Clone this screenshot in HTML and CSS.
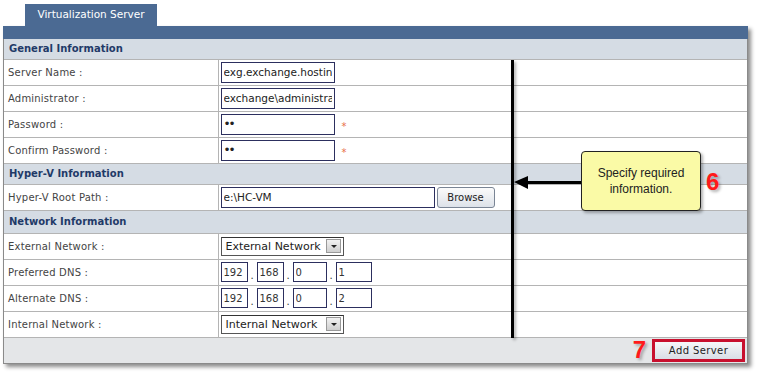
FILE: index.html
```html
<!DOCTYPE html>
<html lang="en">
<head>
    <meta charset="UTF-8">
    <title>Virtualization Server</title>
    <link rel="stylesheet" href="styles.css">
</head>
<body>
    <div class="page">
        <div class="tabs">
            <div class="tab">Virtualization Server</div>
        </div>
        <div class="panel">
            <div class="bar"></div>
            <table class="form">
                <tr class="head"><td colspan="2">General Information</td></tr>
                <tr>
                    <td class="label">Server Name :</td>
                    <td><input class="txt short" type="text" value="exg.exchange.hosting.com"></td>
                </tr>
                <tr>
                    <td class="label">Administrator :</td>
                    <td><input class="txt short" type="text" value="exchange\administrator"></td>
                </tr>
                <tr>
                    <td class="label">Password :</td>
                    <td><input class="txt short pwd" type="text" value="&#8226;&#8226;"><span class="req">*</span></td>
                </tr>
                <tr>
                    <td class="label">Confirm Password :</td>
                    <td><input class="txt short pwd" type="text" value="&#8226;&#8226;"><span class="req">*</span></td>
                </tr>
                <tr class="head"><td colspan="2">Hyper-V Information</td></tr>
                <tr>
                    <td class="label">Hyper-V Root Path :</td>
                    <td><input class="txt long" type="text" value="e:\HC-VM"><button class="btn browse">Browse</button></td>
                </tr>
                <tr class="head net"><td colspan="2">Network Information</td></tr>
                <tr>
                    <td class="label">External Network :</td>
                    <td><div class="select"><span>External Network</span><i class="drop"></i></div></td>
                </tr>
                <tr>
                    <td class="label">Preferred DNS :</td>
                    <td>
                        <div class="ip">
                            <input class="oct" type="text" value="192"><span class="dot">.</span>
                            <input class="oct" type="text" value="168"><span class="dot">.</span>
                            <input class="oct w3" type="text" value="0"><span class="dot">.</span>
                            <input class="oct w4" type="text" value="1">
                        </div>
                    </td>
                </tr>
                <tr>
                    <td class="label">Alternate DNS :</td>
                    <td>
                        <div class="ip">
                            <input class="oct" type="text" value="192"><span class="dot">.</span>
                            <input class="oct" type="text" value="168"><span class="dot">.</span>
                            <input class="oct w3" type="text" value="0"><span class="dot">.</span>
                            <input class="oct w4" type="text" value="2">
                        </div>
                    </td>
                </tr>
                <tr>
                    <td class="label">Internal Network :</td>
                    <td><div class="select"><span>Internal Network</span><i class="drop"></i></div></td>
                </tr>
            </table>
            <div class="footer">
                <span class="step step7">7</span>
                <button class="btn add">Add Server</button>
            </div>
        </div>

        <!-- callout annotation -->
        <div class="vline"></div>
        <div class="arrow"></div>
        <div class="callout">Specify required information.</div>
        <span class="step step6">6</span>
    </div>
</body>
</html>
```

FILE: styles.css
```css
* {
    margin: 0;
    padding: 0;
    box-sizing: border-box;
}

body {
    background: #ffffff;
    font-family: 'DejaVu Sans', Verdana, sans-serif;
    font-size: 10px;
    color: #333;
}

.page {
    position: relative;
    width: 762px;
    height: 374px;
    padding: 4px 0 0 3px;
}

/* Tab strip */
.tabs {
    display: flex;
    padding-left: 22px;
}

.tab {
    width: 132px;
    height: 22px;
    background: #4b6a93;
    color: #fff;
    font-size: 10.5px;
    line-height: 21px;
    text-align: center;
}

/* Main panel */
.panel {
    width: 745px;
    border: 1px solid #8a8a8a;
    border-top: none;
    box-shadow: 3px 3px 4px rgba(0, 0, 0, 0.45);
    background: #fff;
}

.bar {
    height: 13px;
    background: #4b6a93;
    margin: 0 -1px;
}

table.form {
    width: 100%;
    border-collapse: collapse;
}

table.form td {
    height: 26px;
    border-bottom: 1px solid #b4b4b4;
    padding: 0;
    vertical-align: middle;
}

table.form td.label {
    width: 214px;
    border-right: 1px solid #b4b4b4;
    padding-left: 4px;
    color: #444;
    letter-spacing: 0.2px;
}

table.form td + td {
    padding-left: 2px;
}

tr.head td {
    height: 21px;
    background: #d5dce4;
    color: #1f3a68;
    font-weight: bold;
    padding-left: 5px;
    font-size: 10px;
}

tr.head:first-child td {
    height: 20px;
}

tr.net td {
    height: 23px;
}

.txt {
    height: 21px;
    border: 1px solid #2c2f5e;
    font-family: 'DejaVu Sans', Verdana, sans-serif;
    font-size: 10.5px;
    color: #222;
    padding: 0 2px;
    vertical-align: middle;
    outline: none;
}

.pwd {
    font-size: 12px;
    letter-spacing: -2px;
}

.short {
    width: 114px;
}

.long {
    width: 214px;
}

.req {
    color: #e8704a;
    margin-left: 7px;
    font-size: 10px;
    vertical-align: middle;
    position: relative;
    top: 2px;
}

.btn {
    font-family: 'DejaVu Sans', Verdana, sans-serif;
    font-size: 10px;
    color: #222;
    background: linear-gradient(#fbfbfb, #dde2e9);
    border: 1px solid #7a8595;
    border-radius: 3px;
    vertical-align: middle;
}

.browse {
    width: 58px;
    height: 21px;
    margin-left: 2px;
}

.select {
    display: inline-flex;
    align-items: center;
    justify-content: space-between;
    width: 123px;
    height: 19px;
    border: 1px solid #555;
    border-top-color: #333;
    padding: 0 2px 0 4px;
    font-size: 11px;
    color: #222;
    vertical-align: middle;
}

.drop {
    width: 15px;
    height: 14px;
    background: linear-gradient(#f2f2f2, #cfcfcf);
    border: 1px solid #999;
    position: relative;
}

.drop::after {
    content: "";
    position: absolute;
    left: 4px;
    top: 5px;
    border-left: 3px solid transparent;
    border-right: 3px solid transparent;
    border-top: 3px solid #222;
}

.ip {
    display: flex;
    align-items: center;
}

.oct {
    width: 27px;
    height: 20px;
    border: 1px solid #2c2f5e;
    font-family: 'DejaVu Sans', Verdana, sans-serif;
    font-size: 10px;
    color: #333;
    padding: 0 2px;
    outline: none;
}

.w3 {
    width: 34px;
}

.w4 {
    width: 36px;
}

.dot {
    width: 9px;
    text-align: center;
    padding-top: 6px;
    color: #333;
}

.footer {
    display: flex;
    justify-content: flex-end;
    align-items: center;
    height: 25px;
    background: #e4e6e8;
    padding-right: 2px;
}

.add {
    width: 93px;
    height: 23px;
    border: 3px solid #c8102e;
    border-radius: 0;
    letter-spacing: 0.4px;
    background: linear-gradient(#f6f7f9, #d9dee6);
}

/* Annotation overlay */
.step {
    color: #ff1a1a;
    font-family: 'Liberation Sans', Arial, sans-serif;
    font-weight: bold;
    font-size: 24px;
    text-shadow: 2px 2px 3px rgba(0, 0, 0, 0.3);
}

.step7 {
    margin-right: 6px;
    line-height: 20px;
}

.step6 {
    position: absolute;
    left: 706px;
    top: 168px;
}

.vline {
    position: absolute;
    left: 511px;
    top: 60px;
    width: 3px;
    height: 278px;
    background: #000;
    box-shadow: 2px 2px 3px rgba(0, 0, 0, 0.3);
}

.arrow {
    position: absolute;
    left: 527px;
    top: 181px;
    width: 55px;
    height: 3px;
    background: #000;
}

.arrow::before {
    content: "";
    position: absolute;
    left: -13px;
    top: -5px;
    border-top: 6px solid transparent;
    border-bottom: 7px solid transparent;
    border-right: 14px solid #000;
}

.callout {
    position: absolute;
    left: 581px;
    top: 151px;
    width: 120px;
    height: 60px;
    background: #fafaa6;
    border: 1px solid #222;
    border-radius: 4px;
    box-shadow: 2px 2px 3px rgba(0, 0, 0, 0.3);
    font-family: 'Liberation Sans', Arial, sans-serif;
    font-size: 12px;
    color: #222;
    text-align: center;
    display: flex;
    align-items: center;
    justify-content: center;
    padding: 0 8px;
    line-height: 16px;
}
```
